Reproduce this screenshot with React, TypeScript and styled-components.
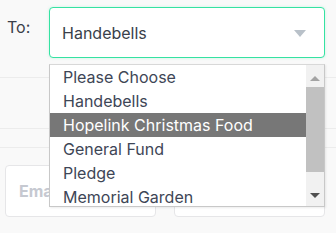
import styled, { createGlobalStyle } from 'styled-components'

const GlobalStyle = createGlobalStyle`
	html, body {
		margin: 0;
		padding: 0;
		background: #f9f9f9;
	}
	body {
		font-family: Inter, "Noto Sans", sans-serif;
		color: #3b4250;
	}
`

const Page = styled.div`
	position: relative;
	width: 336px;
	height: 233px;
	overflow: hidden;
`
const FieldRow = styled.div`
	display: flex;
	align-items: flex-start;
	padding: 7px 11px 0 7px;
	height: 78px;
	box-sizing: border-box;
	border-bottom: 1px solid #ececec;
`
const Label = styled.div`
	width: 42px;
	padding-top: 10px;
	font-size: 16px;
	color: #3a3f4a;
`
const SelectBox = styled.div`
	flex: 1;
	height: 51px;
	box-sizing: border-box;
	background: #fff;
	border: 1px solid #35e2a2;
	border-radius: 4px;
	box-shadow: 0 0 3px rgba(53, 226, 162, 0.25);
	display: flex;
	align-items: center;
	justify-content: space-between;
	padding: 0 18px 0 12px;
	font-size: 16px;
	color: #3a3f4a;
`
const Caret = styled.span`
	width: 0;
	height: 0;
	border-left: 6.5px solid transparent;
	border-right: 6.5px solid transparent;
	border-top: 7px solid #b9c1c9;
	margin-top: 2px;
`
const Section = styled.div<{ $height: number }>`
	height: ${p => p.$height}px;
	box-sizing: border-box;
	border-bottom: 1px solid #ececec;
`
const InputsRow = styled.div`
	display: grid;
	grid-template-columns: 151px 151px;
	gap: 18px;
	padding: 17px 11px 0 5px;
`
const Input = styled.div`
	height: 52px;
	box-sizing: border-box;
	background: #fff;
	border: 1px solid #e6e6e8;
	border-radius: 4px;
	display: flex;
	align-items: center;
	padding-left: 13px;
	font-size: 16px;
	font-weight: 700;
	color: #c6c9d1;
`
const Dropdown = styled.div`
	position: absolute;
	left: 49px;
	top: 64px;
	width: 276px;
	height: 143px;
	box-sizing: border-box;
	background: #fff;
	border: 1px solid #c8c8c8;
	border-top-color: #d8d8d8;
	box-shadow: 1px 1px 2px rgba(0, 0, 0, 0.08);
	display: flex;
	overflow: hidden;
`
const List = styled.div`
	flex: 1;
`
const Option = styled.div<{ $active?: boolean }>`
	height: 24px;
	line-height: 24px;
	padding-left: 13px;
	font-size: 16px;
	white-space: nowrap;
	color: ${p => (p.$active ? '#fff' : '#3e4656')};
	background: ${p => (p.$active ? '#777777' : 'transparent')};
`
const Scrollbar = styled.div`
	width: 18px;
	background: #f1f1f1;
	display: flex;
	flex-direction: column;
	align-items: center;
`
const Arrow = styled.span<{ $down?: boolean }>`
	width: 0;
	height: 0;
	border-left: 5px solid transparent;
	border-right: 5px solid transparent;
	${p => (p.$down ? 'border-top: 5px solid #505050;' : 'border-bottom: 5px solid #a3a3a3;')}
	margin: ${p => (p.$down ? '21px 0 0' : '11px 0 0')};
`
const Thumb = styled.div`
	width: 18px;
	height: 85px;
	margin-top: 6px;
	background: #c1c1c1;
`

const options = [
	'Please Choose',
	'Handebells',
	'Hopelink Christmas Food',
	'General Fund',
	'Pledge',
	'Memorial Garden',
]

export default function App() {
	return (
		<Page>
			<GlobalStyle />
			<FieldRow>
				<Label>To:</Label>
				<SelectBox>
					<span>Handebells</span>
					<Caret />
				</SelectBox>
			</FieldRow>
			<Section $height={51} />
			<Section $height={19} />
			<InputsRow>
				<Input>Email</Input>
				<Input />
			</InputsRow>
			<Dropdown>
				<List>
					{options.map(o => (
						<Option key={o} $active={o === 'Hopelink Christmas Food'}>{o}</Option>
					))}
				</List>
				<Scrollbar>
					<Arrow />
					<Thumb />
					<Arrow $down />
				</Scrollbar>
			</Dropdown>
		</Page>
	)
}
